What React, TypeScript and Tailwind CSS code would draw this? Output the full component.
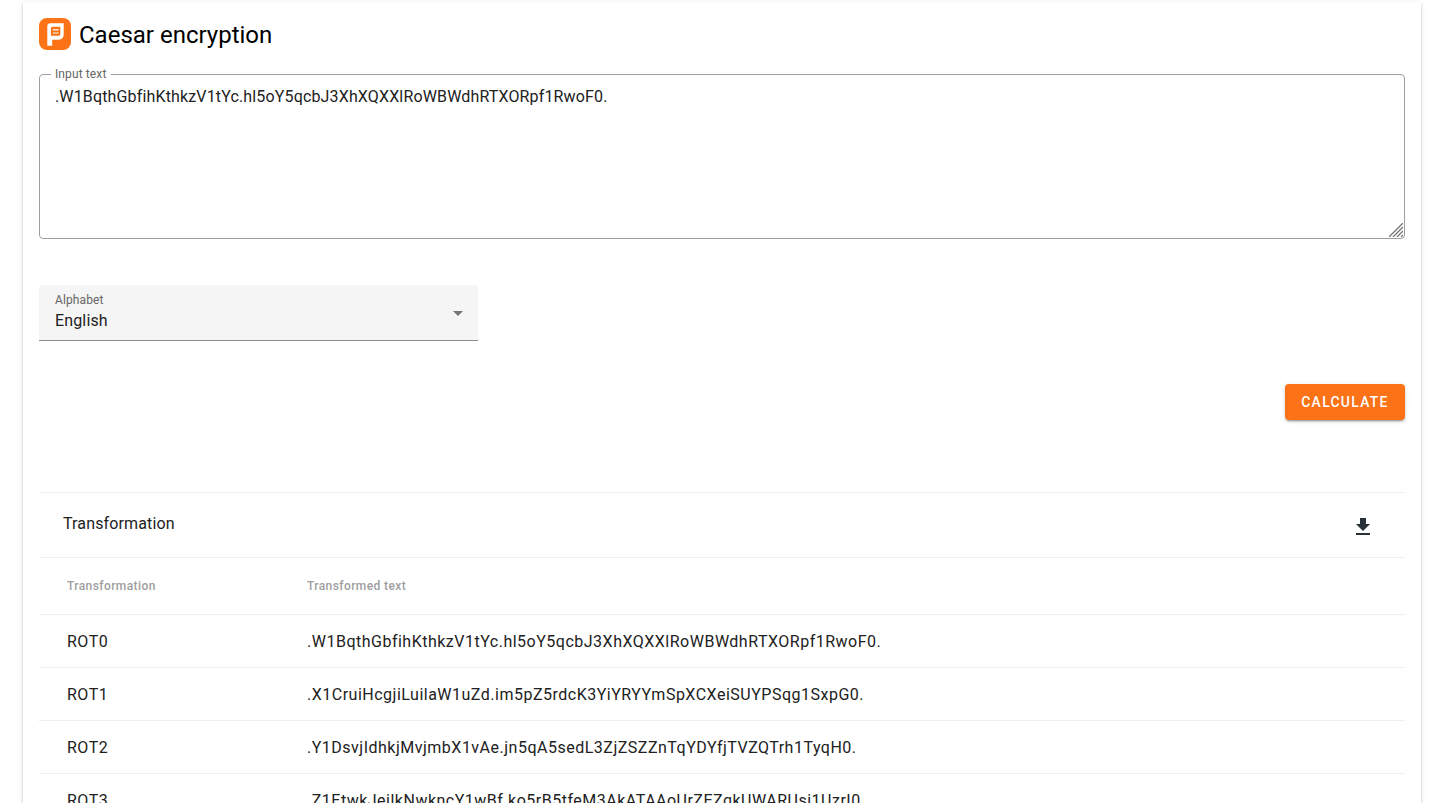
import React, { useMemo, useState } from 'react';

const ENGLISH = 'abcdefghijklmnopqrstuvwxyz';
const DEFAULT_TEXT = '.W1BqthGbfihKthkzV1tYc.hl5oY5qcbJ3XhXQXXlRoWBWdhRTXORpf1RwoF0.';

const rotate = (text: string, shift: number) =>
  text.replace(/[a-z]/gi, (ch) => {
    const next = ENGLISH[(ENGLISH.indexOf(ch.toLowerCase()) + shift) % ENGLISH.length];
    return ch === ch.toLowerCase() ? next : next.toUpperCase();
  });

const Logo: React.FC = () => (
  <svg width="32" height="32" viewBox="0 0 32 32" fill="none">
    <rect width="32" height="32" rx="8" fill="#fc7216" />
    <path
      fillRule="evenodd"
      d="M11.3 5.3H24.7V16.8C24.7 19.8 22.8 21.7 19.8 21.7H13.2V27.8H8.3V8.3C8.3 6.4 9.4 5.3 11.3 5.3ZM13.5 8.8C12.6 8.8 11.9 9.5 11.9 10.4V17.8H19.4C20.6 17.8 21.3 17.1 21.3 15.9V8.8Z"
      fill="#fff"
    />
    <path d="M13.8 11.8H19.6M13.8 15H19.6" stroke="#fff" strokeWidth="1.2" />
  </svg>
);

interface InputFieldProps {
  label: string;
  value: string;
  onChange: (value: string) => void;
}

const InputField: React.FC<InputFieldProps> = ({ label, value, onChange }) => (
  <div className="relative mt-6 h-[165px] rounded border border-[#9e9e9e]">
    <label className="absolute -top-2 left-[11px] bg-white pr-[5px] pl-1 text-xs leading-[14px] tracking-[0.11px] text-[#666]">
      {label}
    </label>
    <textarea
      value={value}
      onChange={(e) => onChange(e.target.value)}
      spellCheck={false}
      className="block h-[163px] w-full resize-none bg-transparent px-[15px] pt-2 text-base leading-7 tracking-[0.15px] text-[#212121] outline-none"
    />
    <svg width="14" height="14" viewBox="0 0 14 14" className="absolute right-px bottom-px">
      <path d="M0 14L14 0M4 14L14 4M8 14L14 8M12 14L14 12" stroke="#757575" strokeWidth="1.3" />
    </svg>
  </div>
);

const AlphabetSelect: React.FC = () => (
  <div className="mt-[46px] flex h-14 w-[439px] items-center justify-between rounded-t border-b border-[#8c8c8c] bg-[#f5f5f5] pr-[15px] pl-4">
    <div className="pb-1">
      <div className="text-xs leading-5 tracking-[0.11px] text-[#666]">Alphabet</div>
      <div className="text-base leading-[22px] tracking-[0.15px] text-[#212121]">English</div>
    </div>
    <svg width="10" height="5" viewBox="0 0 10 5" className="mt-px">
      <path d="M0 0h10L5 5z" fill="#757575" />
    </svg>
  </div>
);

interface ResultTableProps {
  text: string;
}

const ResultTable: React.FC<ResultTableProps> = ({ text }) => {
  const rows = useMemo(
    () => Array.from({ length: ENGLISH.length }, (_, i) => ({ name: `ROT${i}`, value: rotate(text, i) })),
    [text],
  );

  return (
    <section className="mt-[72px] border-t border-[#eee]">
      <header className="flex h-[65px] items-center justify-between border-b border-[#eee] pr-[30px] pl-6">
        <h2 className="pb-[3px] text-base tracking-[0.14px] text-[#212121]">Transformation</h2>
        <button aria-label="Download" className="mt-1">
          <svg width="24" height="24" viewBox="0 0 24 24" fill="#263238">
            <path d="M19 9h-4V3H9v6H5l7 7 7-7zM5 18v2h14v-2H5z" />
          </svg>
        </button>
      </header>
      <div className="flex h-[57px] items-center border-b border-[#eee] pl-7 text-xs font-medium tracking-[0.41px] text-[#9e9e9e]">
        <div className="w-60">Transformation</div>
        <div>Transformed text</div>
      </div>
      {rows.map((row) => (
        <div
          key={row.name}
          className="flex h-[53px] items-center border-b border-[#eee] pt-0.5 pl-7 text-base tracking-[0.5px] text-[#212121]"
        >
          <div className="w-60">{row.name}</div>
          <div>{row.value}</div>
        </div>
      ))}
    </section>
  );
};

export default function App() {
  const [text, setText] = useState(DEFAULT_TEXT);

  return (
    <div className="h-[803px] overflow-hidden bg-white pt-0.5 pr-[11px] pl-[23px] font-[Roboto,sans-serif]">
      <main className="bg-white px-4 pt-4 shadow-[0_3px_1px_-2px_rgba(0,0,0,0.2),0_2px_2px_0_rgba(0,0,0,0.14),0_1px_5px_0_rgba(0,0,0,0.12)]">
        <div className="flex h-8 items-center gap-2">
          <Logo />
          <h1 className="pt-0.5 text-2xl text-black">Caesar encryption</h1>
        </div>
        <InputField label="Input text" value={text} onChange={setText} />
        <AlphabetSelect />
        <div className="mt-[43px] flex justify-end">
          <button className="h-9 w-[120px] rounded bg-[#fc7216] text-[13.9px] font-medium tracking-[1.3px] text-white uppercase shadow-[0_3px_1px_-2px_rgba(0,0,0,0.2),0_2px_2px_0_rgba(0,0,0,0.14),0_1px_5px_0_rgba(0,0,0,0.12)]">
            Calculate
          </button>
        </div>
        <ResultTable text={text} />
      </main>
    </div>
  );
}
